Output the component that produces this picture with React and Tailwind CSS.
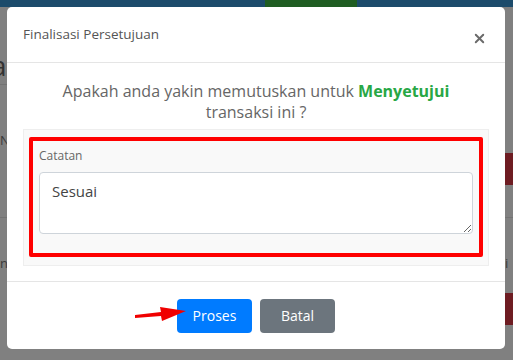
import React, { useState } from 'react';
import { X } from 'lucide-react';

function App() {
  const [note, setNote] = useState('Sesuai');

  return (
    <div className="relative w-[513px] h-[360px] overflow-hidden bg-[#808080]" style={{ fontFamily: '"Open Sans", "Noto Sans", sans-serif' }}>
      {/* Page behind the backdrop */}
      <div className="flex flex-col h-full">
        <div className="h-[7px] bg-[#1c4b6b] shrink-0 flex">
          <div className="ml-[265px] w-[92px] bg-[#1f5d22]" />
        </div>
        <div className="flex-1 flex justify-between">
          <div className="w-[7px] flex flex-col overflow-hidden">
            <div className="h-[78px] border-b border-[#737373] pt-[44px] text-[28px] leading-[28px] text-[#333] -ml-[9px]">a</div>
            <div className="h-[133px] border-b border-[#737373] pt-[46px] text-[13px] text-[#3a3a3a]">N</div>
            <div className="pt-[36px] text-[13px] text-[#3a3a3a]">n</div>
          </div>
          <div className="w-[8px] flex flex-col">
            <div className="h-[146px]" />
            <div className="h-[32px] bg-[#6e1c22]" />
            <div className="h-[33px] border-b border-[#737373]" />
            <div className="h-[75px] pt-[36px] text-[13px] text-[#3a3a3a]">i</div>
            <div className="h-[32px] bg-[#6e1c22]" />
          </div>
        </div>
      </div>

      {/* Modal */}
      <div className="absolute left-[7px] top-[7px] w-[498px] h-[342px] bg-white rounded-[5px] flex flex-col">
        <div className="h-[56px] flex items-center justify-between pl-[16px] pr-[18px] border-b border-[#e5e5e5]">
          <h5 className="text-[13.5px] text-[#555]">Finalisasi Persetujuan</h5>
          <X className="w-[15px] h-[15px] text-[#6a6a6a] mt-[7px]" strokeWidth={3} />
        </div>

        <div className="px-[16px] pt-[18px] flex-1 border-b border-[#e5e5e5]">
          <p className="text-center text-[16px] leading-[21px] text-[#666] px-[30px]">
            Apakah anda yakin memutuskan untuk <span className="font-bold text-[#28a745]">Menyetujui</span> transaksi ini ?
          </p>
          <div className="mt-[6px] h-[137px] bg-[#f9f9f9] border border-[#eeeeee] px-[5px] py-[7px]">
            <div className="border-[4px] border-[#ff0000] rounded-[2px] px-[6px] pt-[7px] h-[120px]">
              <label className="block text-[12px] text-[#666] leading-[16px]">Catatan</label>
              <textarea
                value={note}
                onChange={(e) => setNote(e.target.value)}
                className="mt-[8px] block w-full h-[62px] bg-white border border-[#ced4da] rounded-[4px] px-[12px] py-[7px] text-[15px] text-[#444] outline-none"
              />
            </div>
          </div>
        </div>

        <div className="h-[67px] flex items-center justify-center gap-[8px] relative">
          <svg className="absolute left-[127px] top-[22px]" width="54" height="18" viewBox="0 0 54 18">
            <path d="M1 11 L27 8 L26 3 L52 7 L28 17 L27 12 L1 14 Z" fill="#f00000" />
          </svg>
          <button className="w-[75px] h-[34px] rounded-[4px] bg-[#007bff] text-white text-[14px]">Proses</button>
          <button className="w-[75px] h-[34px] rounded-[4px] bg-[#6c757d] text-white text-[14px]">Batal</button>
        </div>
      </div>
    </div>
  );
}

export default App;
